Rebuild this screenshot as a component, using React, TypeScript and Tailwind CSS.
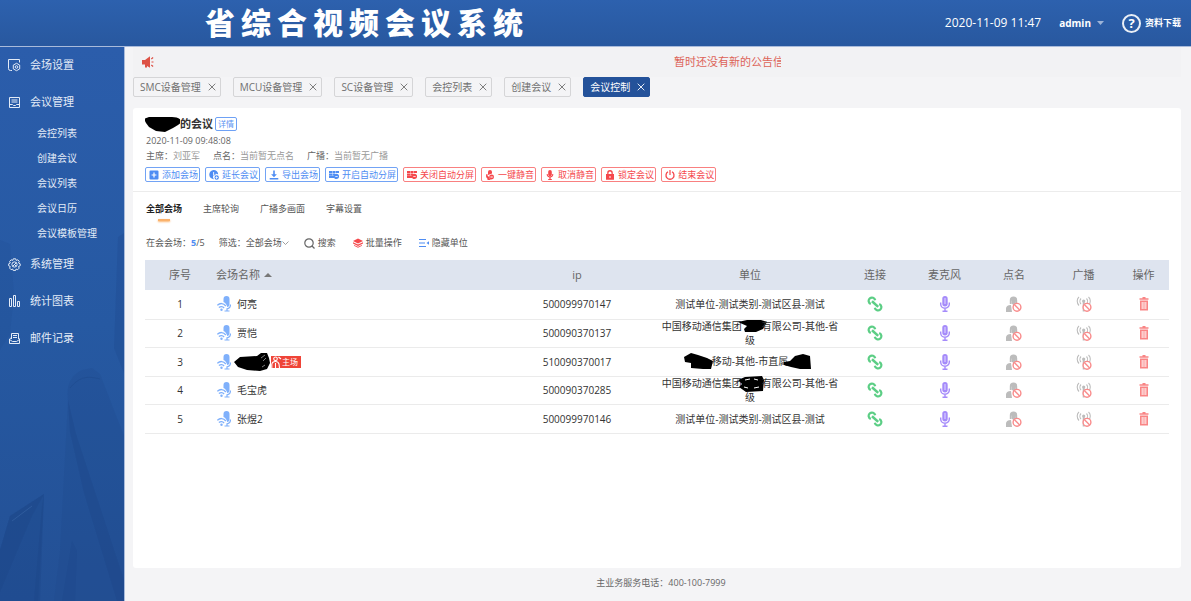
import type { ReactNode } from "react";

const openTabs = ["SMC设备管理", "MCU设备管理", "SC设备管理", "会控列表", "创建会议", "会议控制"];

const meetingMenu = ["会控列表", "创建会议", "会议列表", "会议日历", "会议模板管理"];

const rows = [
  { id: 1, name: "何亮", ip: "500099970147" },
  { id: 2, name: "贾恺", ip: "500090370137" },
  { id: 3, name: "", ip: "510090370017", host: true },
  { id: 4, name: "毛宝虎", ip: "500090370285" },
  { id: 5, name: "张煜2", ip: "500099970146" },
];

/* ---------- sidebar icons ---------- */

const SideIcon = ({ children }: { children: ReactNode }) => (
  <svg viewBox="0 0 13 13" className="w-[13px] h-[13px] shrink-0" fill="none" stroke="currentColor" strokeWidth="1">
    {children}
  </svg>
);

const VenueIcon = () => (
  <SideIcon>
    <path d="M4 11.5H2.500a2 2 0 0 1-2-2V.5h11v3" />
    <path d="M8.500 4.300l3.200 1.800v3.800l-3.200 1.800-3.200-1.800V6.100z" />
    <circle cx="8.500" cy="8" r="1.300" />
  </SideIcon>
);

const MeetingIcon = () => (
  <SideIcon>
    <path d="M1.500 1.500h10v10h-10z" />
    <path d="M3.500 4h6M3.500 6h6M1.500 8.500h3l1 1h2l1-1h3" />
  </SideIcon>
);

const GearIcon = () => (
  <SideIcon>
    <path d="M5.300.8h2.400l.5 1.600 1.600-.6 1.500 1.700-.8 1.500 1.700.8v2l-1.700.7.7 1.600-1.500 1.600-1.600-.7-.6 1.600H5.300l-.6-1.600-1.600.7-1.500-1.600.7-1.600-1.600-.7v-2l1.600-.8-.7-1.500 1.500-1.700 1.600.6z" />
    <circle cx="6.500" cy="6.500" r="2.600" />
    <path d="M4.700 8.300l3.600-3.600M6.500 6.500l1.600 1.600" />
  </SideIcon>
);

const StatsIcon = () => (
  <SideIcon>
    <path d="M1.500 3.500h2v8h-2zM5.500.5h2v11h-2zM9.500 6.500h2v5h-2z" />
  </SideIcon>
);

const MailIcon = () => (
  <SideIcon>
    <path d="M3.500 7V1.500h7V7M5 3.500h4M5 5.500h4" />
    <path d="M3.500 5.500L1.500 7v4.500h10V7l-1-1M1.500 7.500l3 2h4l3-2" />
  </SideIcon>
);

/* ---------- small shared icons ---------- */

const CloseIcon = () => (
  <svg viewBox="0 0 8 8" className="w-2 h-2" fill="none" stroke="currentColor" strokeWidth=".9">
    <path d="M.7.7l6.600 6.600M7.300.7L.7 7.300" />
  </svg>
);

const ToolIcon = ({ children }: { children: ReactNode }) => (
  <svg viewBox="0 0 10 10" className="w-[10px] h-[10px] shrink-0" fill="currentColor">
    {children}
  </svg>
);

const SplitScreenIcon = () => (
  <ToolIcon>
    <path d="M0 1h3v2H0zM3.400 1h2.800v2H3.400zM6.600 1H10v2H6.600zM0 3.400h3v2H0zM3.400 3.400h2.800v2H3.400zM0 5.800h5V8H0z" />
    <path d="M7.500 3.800a2.600 2.600 0 1 1 0 5.200 2.600 2.600 0 0 1 0-5.200zM6.300 5.900v.9h2.400v-.9z" fillRule="evenodd" />
  </ToolIcon>
);

const blueTools = [
  {
    label: "添加会场",
    icon: (
      <ToolIcon>
        <path fillRule="evenodd" d="M1.500.5h7a1 1 0 0 1 1 1v7a1 1 0 0 1-1 1h-7a1 1 0 0 1-1-1v-7a1 1 0 0 1 1-1zM4.400 2.600v1.800H2.600v1.200h1.800v1.800h1.200V5.600h1.800V4.400H5.600V2.600z" />
      </ToolIcon>
    ),
  },
  {
    label: "延长会议",
    icon: (
      <ToolIcon>
        <path fillRule="evenodd" d="M4.600 0a4.600 4.600 0 0 1 4.600 4.600A2.800 2.800 0 0 0 5.200 9.200 4.600 4.600 0 1 1 4.600 0zM4.200 2v3.200h2.400v-.9H5.100V2z" />
        <path fillRule="evenodd" d="M7.700 5.300a2.200 2.200 0 1 1 0 4.400 2.200 2.200 0 0 1 0-4.400zM7.300 6.200v1H6.400v.7h.9v1H8v-1h.9v-.7H8v-1z" />
      </ToolIcon>
    ),
  },
  {
    label: "导出会场",
    icon: (
      <ToolIcon>
        <path d="M4.200.5h1.600v3.800h2.100L5 7.200 2.100 4.300h2.100zM.7 8h8.600v1.400H.7z" />
      </ToolIcon>
    ),
  },
  { label: "开启自动分屏", icon: <SplitScreenIcon /> },
];

const redTools = [
  { label: "关闭自动分屏", icon: <SplitScreenIcon /> },
  {
    label: "一键静音",
    icon: (
      <ToolIcon>
        <path d="M5 0a2 2 0 0 1 2 2v1.600L3 5V2a2 2 0 0 1 2-2zM1.500 4h1a2.600 2.600 0 0 0 2 3v1.600h1V10h-3V8.800A4 4 0 0 1 1.500 4z" />
        <path fillRule="evenodd" d="M6.600 4.600a2.400 2.400 0 1 1 0 4.800 2.400 2.400 0 0 1 0-4.800zM5.400 6.600v.9h2.400v-.9z" />
      </ToolIcon>
    ),
  },
  {
    label: "取消静音",
    icon: (
      <ToolIcon>
        <rect x="3.200" y="0" width="3.600" height="6.400" rx="1.800" />
        <path d="M1.700 4h.9a2.400 2.400 0 0 0 4.800 0h.9A3.400 3.400 0 0 1 5.600 7.500v1.400h1.200v1H3.200v-1h1.200V7.500A3.400 3.400 0 0 1 1.700 4z" />
      </ToolIcon>
    ),
  },
  {
    label: "锁定会议",
    icon: (
      <ToolIcon>
        <path fillRule="evenodd" d="M2.200 4V2.900a2.800 2.800 0 0 1 5.600 0V4h1.200v5.700H1V4zM3.500 4h3V2.900a1.500 1.500 0 0 0-3 0zM4.500 6v2h1V6z" />
      </ToolIcon>
    ),
  },
  {
    label: "结束会议",
    icon: (
      <ToolIcon>
        <path d="M4.400 0h1.200v5H4.400z" />
        <path d="M3 1.800a4 4 0 1 0 4 0" fill="none" stroke="currentColor" strokeWidth="1.300" />
      </ToolIcon>
    ),
  },
];

/* ---------- table icons ---------- */

const VenueMicIcon = () => (
  <svg viewBox="0 0 14 16" className="w-[14px] h-4 shrink-0" fill="none" stroke="#7fb0fb">
    <path d="M6.500 6V3a3 3 0 0 1 6 0v5.500c0 1.500-1 2.500-2.300 2.500C9.700 8.500 8.500 7 6.500 6z" fill="#7fb0fb" stroke="none" />
    <path d="M13.500 8.500c0 2.500-1 4-3.500 4.300v2M7.500 15h5" strokeWidth="1.200" />
    <path d="M.3 9.300C3 6.800 6.500 7 8.800 10" strokeWidth="1.400" />
    <path d="M1.900 11.600c1.700-1.500 3.800-1.400 5.200.4" strokeWidth="1.300" />
    <circle cx="4.500" cy="13.700" r="1.200" fill="#7fb0fb" stroke="none" />
  </svg>
);

const LinkIcon = () => (
  <svg viewBox="0 0 16 16" className="w-4 h-4" fill="none" stroke="#5cce85" strokeWidth="2.200">
    <path d="M3.800 8A3.300 3.300 0 1 1 8.200 4.300" />
    <path d="M7.800 11.700A3.300 3.300 0 1 0 12.200 8" />
    <path d="M5 5.300l6.200 5.600" strokeWidth="2.600" />
  </svg>
);

const MicIcon = () => (
  <svg viewBox="0 0 10 16" className="w-[10px] h-4" fill="#a58bfa">
    <rect x="2.300" y="0" width="5.400" height="10.500" rx="2.700" />
    <path d="M4 3h2M4 5h2M4 7h2" stroke="#fff" strokeWidth=".7" />
    <path d="M.7 6.500V8a4.300 4.300 0 0 0 8.600 0V6.500M5 12.300v3" fill="none" stroke="#a58bfa" strokeWidth="1.400" />
    <path d="M2.500 14.500h5V16h-5z" />
  </svg>
);

const Ban = () => (
  <g fill="#fff" stroke="#f98b8b" strokeWidth="1.400">
    <circle cx="11" cy="11.300" r="3.900" />
    <path d="M8.300 8.600l5.400 5.400" />
  </g>
);

const RollCallIcon = () => (
  <svg viewBox="0 0 16 16" className="w-4 h-4" fill="#bcbcbc">
    <path d="M3.800 4.200a3.700 3.700 0 0 1 7.400 0V8H9.700V5.500C7.700 5.500 6 5 5.500 4.500V8H3.800z" />
    <path d="M5.500 4h4.300v3.500L7.700 9.300 5.500 7.500zM0 16v-3.500c0-2 1.500-3.300 5-3.500l1 7z" />
    <Ban />
  </svg>
);

const BroadcastIcon = () => (
  <svg viewBox="0 0 16 16" className="w-4 h-4" fill="none" stroke="#bcbcbc" strokeWidth="1.100">
    <path d="M3 1C.6 3 .6 7 3 9.500M5 2.500C3.600 4 3.600 6.500 5 8M12.500 1c2.400 2 2.400 6 0 8.500M10.500 2.500c1.400 1.500 1.400 4 0 5.500" />
    <circle cx="7.700" cy="5" r="1.600" fill="#bcbcbc" stroke="none" />
    <path d="M7.700 5v10.500" strokeWidth="2" />
    <Ban />
  </svg>
);

const TrashIcon = () => (
  <svg viewBox="0 0 10 14" className="w-[10px] h-[14px]" fill="#f98585">
    <path d="M3.500 0h3v1.200H9.500v1.600h-9V1.200h3z" />
    <path fillRule="evenodd" d="M1 3.600h8V13.500H1zM2.700 5v7h.9V5zM4.550 5v7h.9V5zM6.400 5v7h.9V5z" />
  </svg>
);

/* hand drawn marker blobs over names */
const Blot = ({ shape }: { shape: "wide" | "name" | "short" | "left" | "right" | "loop" }) => {
  if (shape === "wide")
    return (
      <svg viewBox="0 0 35 15" className="w-[35px] h-[15px] shrink-0">
        <path d="M-1 2l5-2h23c5 0 9 2 10 5l-4 3-5 3-8 4-9-1-7-4-3-4z" />
      </svg>
    );
  if (shape === "name")
    return (
      <svg viewBox="0 0 36 18" className="w-9 h-[18px] shrink-0">
        <path d="M0 9l6-5 17-1 4-3 6 0 2 5 1 5-3 6-7 2-13-1-9-3z" />
        <path d="M27 5l4-3M29 8l3-3M28 14l3-2" stroke="#fff" strokeWidth=".5" />
      </svg>
    );
  if (shape === "loop")
    return (
      <svg viewBox="0 0 20 12" className="inline-block w-5 h-3 overflow-visible">
        <path d="M-4 1L3-2l17-1 2 4-1 11-17 1-7-5 3-3z" />
        <path d="M3 1l5-1M12 0l4 1M2 8l4 1M12 9l5-1" stroke="#fff" strokeWidth="1" />
      </svg>
    );
  if (shape === "left")
    return (
      <svg viewBox="0 0 25 12" className="inline-block w-[25px] h-3 overflow-visible">
        <path d="M-3 1l7-4 7 2 9 3 6 3-2 8-8 0-12-1V7l-6-1z" />
      </svg>
    );
  if (shape === "right")
    return (
      <svg viewBox="0 0 25 12" className="inline-block w-[25px] h-3 overflow-visible">
        <path d="M-4 6l6-1 5-5 8-2 7 2 1 13-11 0-9-2-7-2z" />
      </svg>
    );
  return (
    <svg viewBox="0 0 20 12" className="inline-block w-5 h-3 overflow-visible">
      <path d="M-4 0l9-2 14 0 6 2-4 7-7 3-11 0-1-3 3-3z" />
    </svg>
  );
};

const unitOf = (id: number) => {
  if (id === 2)
    return (
      <>
        中国移动通信集团
        <Blot shape="short" />
        有限公司-其他-省级
      </>
    );
  if (id === 3)
    return (
      <>
        <Blot shape="left" />
        移动-其他-市直属
        <Blot shape="right" />
      </>
    );
  if (id === 4)
    return (
      <>
        中国移动通信集团
        <Blot shape="loop" />
        有限公司-其他-省级
      </>
    );
  return "测试单位-测试类别-测试区县-测试";
};

/* ---------- layout ---------- */

const Header = () => (
  <header className="flex items-center h-[47px] shrink-0 pl-[205px] pr-[10px] border-b border-[#a9bbdb] bg-gradient-to-b from-[#2d61ae] to-[#28589f] text-white">
    <h1 className="text-[30px] leading-[46px] font-black tracking-[6px] whitespace-nowrap">省综合视频会议系统</h1>
    <div className="ml-auto flex items-center whitespace-nowrap">
      <time className="text-[12px] mr-[18px]">2020-11-09 11:47</time>
      <button type="button" className="flex items-center gap-[6px] text-[10px] font-bold mr-[18px]">
        admin
        <svg viewBox="0 0 7 4" className="w-[7px] h-1" fill="#9db4d8">
          <path d="M0 0h7L3.500 4z" />
        </svg>
      </button>
      <a href="#download" className="flex items-center gap-1 text-[9px] font-bold">
        <span className="flex items-center justify-center w-[19px] h-[19px] rounded-full border-2 border-white/90 text-[13px] leading-none">?</span>
        资料下载
      </a>
    </div>
  </header>
);

const MenuItem = ({ icon, label }: { icon: ReactNode; label: string }) => (
  <a href="#menu" className="flex items-center gap-[9px] h-[37px] pl-2 text-[11px]">
    {icon}
    {label}
  </a>
);

const Sidebar = () => (
  <aside className="relative w-[125px] shrink-0 overflow-hidden border-r border-[#a9bbdb] bg-gradient-to-b from-[#2b5dab] via-[#2659a2] to-[#235095] text-[#e3ebf7]">
    <svg viewBox="0 0 124 554" preserveAspectRatio="none" className="absolute inset-0 w-full h-full" fill="#1c4587">
      <path d="M0 193l10 4 4 50-4 40-10 16z" opacity=".12" />
      <path d="M118 190l6-4v140l-10-25z" opacity=".25" />
      <path d="M68 353c-2-15 3-25 14-30l10-2 8 6 24 62v165H54l6-50z" opacity=".2" />
      <path d="M68 353l8 34 48 146v21h-7L84 446 70 385z" opacity=".35" />
      <path d="M70 341c10-12 18-12 30-9" fill="none" stroke="#1c4587" opacity=".4" />
      <path d="M44 447l-34 22-10 34v51h38z" opacity=".3" />
      <path d="M44 447L32 469 0 545v-42l10-34zM44 447l-4 107h-6l8-95z" opacity=".35" />
      <path d="M12 474l20-15" stroke="#4774b5" opacity=".4" />
      <path d="M62 554l10-60 5 10-2 50z" opacity=".25" />
    </svg>
    <nav className="relative">
      <MenuItem icon={<VenueIcon />} label="会场设置" />
      <MenuItem icon={<MeetingIcon />} label="会议管理" />
      <ul>
        {meetingMenu.map((item) => (
          <li key={item}>
            <a href="#meeting" className="flex items-center h-[25px] pl-[37px] text-[10px]">
              {item}
            </a>
          </li>
        ))}
      </ul>
      <MenuItem icon={<GearIcon />} label="系统管理" />
      <MenuItem icon={<StatsIcon />} label="统计图表" />
      <MenuItem icon={<MailIcon />} label="邮件记录" />
    </nav>
  </aside>
);

const Notice = () => (
  <div className="flex items-center h-[30px] pl-[9px] bg-[#f2f2f4]">
    <svg viewBox="0 0 12 12" className="w-3 h-3 shrink-0" fill="#dd5145">
      <path d="M0 4h3l5-3.800v11.600L5 10v1.500H3V8.500H0z" />
      <path d="M9.300 3l1.800-1.500M9.500 6h2M9.300 9l1.800 1.500" stroke="#dd5145" strokeWidth="1.200" />
    </svg>
    <p className="ml-auto mr-[400px] w-[107px] overflow-hidden whitespace-nowrap text-[11px] text-[#dd6358]">暂时还没有新的公告信息</p>
  </div>
);

const OpenTabs = () => (
  <div className="flex gap-3">
    {openTabs.map((tab) => {
      const active = tab === "会议控制";
      return (
        <button
          key={tab}
          type="button"
          className={`flex items-center gap-[7px] h-5 pl-[6px] pr-1 border rounded-[2px] text-[10px] whitespace-nowrap ${
            active ? "bg-[#24529a] border-[#24529a] text-white" : "border-[#d5d5d7] text-[#707070]"
          }`}
        >
          {tab}
          <CloseIcon />
        </button>
      );
    })}
  </div>
);

const MeetingInfo = () => (
  <section className="px-3 pt-2 pb-[9px] border-b border-[#ececec]">
    <div className="flex items-center h-4">
      <Blot shape="wide" />
      <h2 className="text-[11px] font-bold text-[#333]">的会议</h2>
      <button type="button" className="ml-[2px] h-[14px] px-[2px] border border-[#6ea1f5] rounded-[2px] text-[8px] leading-3 text-[#5b93f2]">
        详情
      </button>
    </div>
    <time className="block mt-[2px] pl-px text-[9px] leading-[14px] text-[#666]">2020-11-09 09:48:08</time>
    <dl className="flex gap-[13px] pl-px text-[9px] leading-4 text-[#999]">
      <div className="flex">
        <dt className="text-[#666]">主席：</dt>
        <dd>刘亚军</dd>
      </div>
      <div className="flex">
        <dt className="text-[#666]">点名：</dt>
        <dd>当前暂无点名</dd>
      </div>
      <div className="flex">
        <dt className="text-[#666]">广播：</dt>
        <dd>当前暂无广播</dd>
      </div>
    </dl>
    <div className="flex gap-[5px] mt-[3px]">
      {blueTools.map((tool) => (
        <button key={tool.label} type="button" className="flex items-center gap-[3px] h-[15px] pl-[3px] pr-px border border-[#72a3f5] rounded-[2px] text-[9px] leading-[13px] text-[#4f8df3] whitespace-nowrap">
          {tool.icon}
          {tool.label}
        </button>
      ))}
      {redTools.map((tool) => (
        <button key={tool.label} type="button" className="flex items-center gap-[3px] h-[15px] pl-[3px] pr-px border border-[#f98080] rounded-[2px] text-[9px] leading-[13px] text-[#f5484c] whitespace-nowrap">
          {tool.icon}
          {tool.label}
        </button>
      ))}
    </div>
  </section>
);

const ViewTabs = () => (
  <nav className="flex gap-[21px] pl-px mt-[9px] text-[9px] leading-4 text-[#555]">
    <a href="#all" className="flex flex-col items-center gap-[2px] font-bold text-[#222]">
      全部会场
      <span className="w-3 h-[2px] bg-[#fbb26b] shadow-[0_1px_2px_#fbb26b]" />
    </a>
    <a href="#poll">主席轮询</a>
    <a href="#multi">广播多画面</a>
    <a href="#caption">字幕设置</a>
  </nav>
);

const Filters = () => (
  <div className="flex items-center h-4 pl-px mt-[14px] mb-[9px] text-[9px] text-[#555]">
    <span>
      在会会场：<b className="text-[#4f8df3]">5</b>/5
    </span>
    <label htmlFor="venue" className="ml-[14px]">
      筛选：
    </label>
    <select id="venue" className="appearance-none w-9 bg-transparent">
      <option>全部会场</option>
    </select>
    <svg viewBox="0 0 7 4" className="w-[7px] h-1" fill="none" stroke="#888" strokeWidth=".8">
      <path d="M.5.5l3 3 3-3" />
    </svg>
    <button type="button" className="flex items-center gap-[3px] ml-[15px]">
      <svg viewBox="0 0 11 11" className="w-[11px] h-[11px]" fill="none" stroke="#666" strokeWidth="1.200">
        <circle cx="5" cy="5" r="4.200" />
        <path d="M8 8l2.500 2.500" />
      </svg>
      搜索
    </button>
    <button type="button" className="flex items-center gap-[3px] ml-[17px]">
      <svg viewBox="0 0 10 10" className="w-[10px] h-[10px]" fill="#f5484c">
        <path d="M5 .5l5 2.500-5 2.500L0 3z" />
        <path d="M0 4.200l5 2.400 5-2.400v1.300L5 8 0 5.500zM1 6.900l4 1.900 4-1.900v.8L5 9.700 1 7.700z" />
      </svg>
      批量操作
    </button>
    <button type="button" className="flex items-center gap-[3px] ml-[17px]">
      <svg viewBox="0 0 10 10" className="w-[10px] h-[10px]" fill="#4f8df3">
        <path d="M0 1h7v1H0zM0 4.500h6v1H0zM0 8h7v1H0zM10 3.300v3.400L7.500 5z" />
      </svg>
      隐藏单位
    </button>
  </div>
);

const HostBadge = () => (
  <span className="flex items-center h-3 pr-[3px] bg-[#ef4438] text-[8px] leading-3 text-white">
    <svg viewBox="0 0 11 12" className="w-[11px] h-3" fill="none" stroke="#fff" strokeWidth="1.100">
      <circle cx="4.500" cy="2.800" r="1.800" />
      <path d="M.8 12V8.500C1 6.500 2.500 5.500 4.500 5.500s3 .8 3.500 2.500l.5 4M4.500 7v5M7.500 1l2.500 2" />
    </svg>
    主场
  </span>
);

const VenueTable = () => (
  <table className="w-full table-fixed border-collapse text-center text-[10px] leading-3 text-[#333]">
    <colgroup>
      <col className="w-[70px]" />
      <col />
      <col className="w-[166px]" />
      <col className="w-[180px]" />
      <col className="w-[70px]" />
      <col className="w-[69px]" />
      <col className="w-[70px]" />
      <col className="w-[69px]" />
      <col className="w-[51px]" />
    </colgroup>
    <thead>
      <tr className="h-[30px] bg-[#dee4ef] text-[11px] text-[#666]">
        <th className="font-normal">序号</th>
        <th className="font-normal text-left pl-px">
          <span className="flex items-center gap-1">
            会场名称
            <svg viewBox="0 0 8 4" className="w-2 h-1" fill="#777">
              <path d="M0 4l4-4 4 4z" />
            </svg>
          </span>
        </th>
        <th className="font-normal">ip</th>
        <th className="font-normal">单位</th>
        <th className="font-normal">连接</th>
        <th className="font-normal">麦克风</th>
        <th className="font-normal">点名</th>
        <th className="font-normal">广播</th>
        <th className="font-normal">操作</th>
      </tr>
    </thead>
    <tbody>
      {rows.map((row) => (
        <tr key={row.id} className="h-[29px] even:h-[28px] border-b border-[#ebebeb]">
          <td>{row.id}</td>
          <td className="pl-[2px]">
            <div className="flex items-center">
              <VenueMicIcon />
              {row.host ? (
                <span className="flex items-center gap-px ml-[3px]">
                  <Blot shape="name" />
                  <HostBadge />
                </span>
              ) : (
                <span className="ml-[6px]">{row.name}</span>
              )}
            </div>
          </td>
          <td>{row.ip}</td>
          <td className="break-all">{unitOf(row.id)}</td>
          <td>
            <button type="button" aria-label="连接" className="block mx-auto">
              <LinkIcon />
            </button>
          </td>
          <td>
            <button type="button" aria-label="麦克风" className="block mx-auto">
              <MicIcon />
            </button>
          </td>
          <td>
            <button type="button" aria-label="点名" className="block mx-auto">
              <RollCallIcon />
            </button>
          </td>
          <td>
            <button type="button" aria-label="广播" className="block mx-auto">
              <BroadcastIcon />
            </button>
          </td>
          <td>
            <button type="button" aria-label="删除" className="block mx-auto">
              <TrashIcon />
            </button>
          </td>
        </tr>
      ))}
    </tbody>
  </table>
);

const App = () => {
  return (
    <div className="flex flex-col min-h-screen bg-[#f4f4f6] font-['Open_Sans','Noto_Sans_CJK_SC',sans-serif]">
      <Header />
      <div className="flex flex-1">
        <Sidebar />
        <main className="flex flex-col flex-1 min-w-0 pl-2 pr-[10px]">
          <Notice />
          <OpenTabs />
          <div className="flex-1 mt-[11px] bg-white rounded-[3px]">
            <MeetingInfo />
            <div className="px-3">
              <ViewTabs />
              <Filters />
              <VenueTable />
            </div>
          </div>
          <footer className="h-[33px] pl-2 text-center text-[9px] leading-[30px] text-[#666]">主业务服务电话：400-100-7999</footer>
        </main>
      </div>
    </div>
  );
};

export default App;
